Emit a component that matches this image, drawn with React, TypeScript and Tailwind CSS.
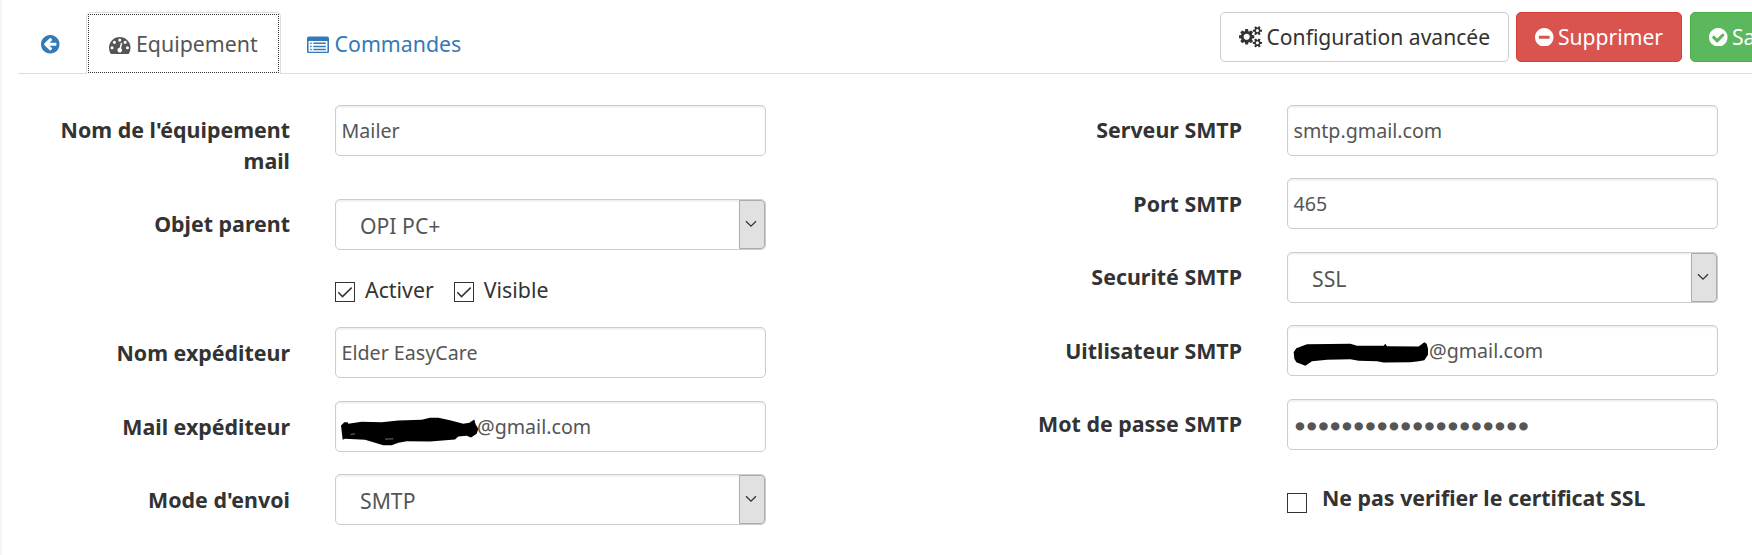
import type { ReactNode } from 'react';

type IconProps = { d: string; box: string; className: string };

const Icon = ({ d, box, className }: IconProps) => (
  <svg viewBox={box} className={`shrink-0 fill-current ${className}`} preserveAspectRatio="none">
    <path d={d} />
  </svg>
);

const ARROW =
  'M1280 832v-128q0-26-19-45t-45-19h-502l189-189q19-19 19-45t-19-45l-91-91q-18-18-45-18t-45 18l-362 362-91 91q-18 18-18 45t18 45l91 91 362 362q18 18 45 18t45-18l91-91q18-18 18-45t-18-45l-189-189h502q26 0 45-19t19-45zm256-64q0 209-103 385.5t-279.5 279.5-385.5 103-385.5-103-279.5-279.5-103-385.5 103-385.5 279.5-279.5 385.5-103 385.5 103 279.5 279.5 103 385.5z';
const MINUS =
  'M1216 832v-128q0-26-19-45t-45-19h-768q-26 0-45 19t-19 45v128q0 26 19 45t45 19h768q26 0 45-19t19-45zm320-64q0 209-103 385.5t-279.5 279.5-385.5 103-385.5-103-279.5-279.5-103-385.5 103-385.5 279.5-279.5 385.5-103 385.5 103 279.5 279.5 103 385.5z';
const CHECK =
  'M1284 606q0-28-18-46l-91-90q-19-19-45-19t-45 19l-408 407-226-226q-19-19-45-19t-45 19l-91 90q-18 18-18 46 0 27 18 45l362 362q19 19 45 19 27 0 46-19l543-543q18-18 18-45zm252 162q0 209-103 385.5t-279.5 279.5-385.5 103-385.5-103-279.5-279.5-103-385.5 103-385.5 279.5-279.5 385.5-103 385.5 103 279.5 279.5 103 385.5z';
const GAUGE =
  'M384 1152q0-53-37.5-90.5t-90.5-37.5-90.5 37.5-37.5 90.5 37.5 90.5 90.5 37.5 90.5-37.5 37.5-90.5zm192-448q0-53-37.5-90.5t-90.5-37.5-90.5 37.5-37.5 90.5 37.5 90.5 90.5 37.5 90.5-37.5 37.5-90.5zm428 481l101-382q6-26-7.5-48.5t-38.5-29.5-48 6.5-30 39.5l-101 382q-60 5-107 43.5t-63 98.5q-20 77 20 146t117 89 146-20 89-117q16-60-6-117t-72-91zm660-33q0-53-37.5-90.5t-90.5-37.5-90.5 37.5-37.5 90.5 37.5 90.5 90.5 37.5 90.5-37.5 37.5-90.5zm-640-640q0-53-37.5-90.5t-90.5-37.5-90.5 37.5-37.5 90.5 37.5 90.5 90.5 37.5 90.5-37.5 37.5-90.5zm448 192q0-53-37.5-90.5t-90.5-37.5-90.5 37.5-37.5 90.5 37.5 90.5 90.5 37.5 90.5-37.5 37.5-90.5zm320 448q0 261-141 483-19 29-54 29h-1402q-35 0-54-29-141-221-141-483 0-182 71-348t191-286 286-191 348-71 348 71 286 191 191 286 71 348z';
const LIST =
  'M384 1216v64q0 13-9.5 22.5t-22.5 9.5h-64q-13 0-22.5-9.5t-9.5-22.5v-64q0-13 9.5-22.5t22.5-9.5h64q13 0 22.5 9.5t9.5 22.5zm0-256v64q0 13-9.5 22.5t-22.5 9.5h-64q-13 0-22.5-9.5t-9.5-22.5v-64q0-13 9.5-22.5t22.5-9.5h64q13 0 22.5 9.5t9.5 22.5zm0-256v64q0 13-9.5 22.5t-22.5 9.5h-64q-13 0-22.5-9.5t-9.5-22.5v-64q0-13 9.5-22.5t22.5-9.5h64q13 0 22.5 9.5t9.5 22.5zm1152 512v64q0 13-9.5 22.5t-22.5 9.5h-960q-13 0-22.5-9.5t-9.5-22.5v-64q0-13 9.5-22.5t22.5-9.5h960q13 0 22.5 9.5t9.5 22.5zm0-256v64q0 13-9.5 22.5t-22.5 9.5h-960q-13 0-22.5-9.5t-9.5-22.5v-64q0-13 9.5-22.5t22.5-9.5h960q13 0 22.5 9.5t9.5 22.5zm0-256v64q0 13-9.5 22.5t-22.5 9.5h-960q-13 0-22.5-9.5t-9.5-22.5v-64q0-13 9.5-22.5t22.5-9.5h960q13 0 22.5 9.5t9.5 22.5zm128 704v-832q0-13-9.5-22.5t-22.5-9.5h-1472q-13 0-22.5 9.5t-9.5 22.5v832q0 13 9.5 22.5t22.5 9.5h1472q13 0 22.5-9.5t9.5-22.5zm128-1088v1088q0 66-47 113t-113 47h-1472q-66 0-113-47t-47-113v-1088q0-66 47-113t113-47h1472q66 0 113 47t47 113z';
const COGS =
  'M896 896q0-106-75-181t-181-75-181 75-75 181 75 181 181 75 181-75 75-181zm768 512q0-52-38-90t-90-38-90 38-38 90q0 53 37.5 90.5t90.5 37.5 90.5-37.5 37.5-90.5zm0-1024q0-52-38-90t-90-38-90 38-38 90q0 53 37.5 90.5t90.5 37.5 90.5-37.5 37.5-90.5zm-384 421v185q0 10-7 19.5t-16 10.5l-155 24q-11 35-32 76 34 48 90 115 7 11 7 20 0 12-7 19-23 30-82.5 89.5t-78.5 59.5q-11 0-21-7l-115-90q-37 19-77 31-11 108-23 155-7 24-30 24h-186q-11 0-20-7.5t-10-17.5l-23-153q-34-10-75-31l-118 89q-7 7-20 7-11 0-21-8-144-133-144-160 0-9 7-19 10-14 41-53t47-61q-23-44-35-82l-152-24q-10-1-17-9.5t-7-19.5v-185q0-10 7-19.5t16-10.5l155-24q11-35 32-76-34-48-90-115-7-11-7-20 0-12 7-20 22-30 82-89t79-59q11 0 21 7l115 90q34-18 77-32 11-108 23-154 7-24 30-24h186q11 0 20 7.5t10 17.5l23 153q34 10 75 31l118-89q8-7 20-7 11 0 21 8 144 133 144 160 0 8-7 19-12 16-42 54t-45 60q23 48 34 82l152 23q10 2 17 10.5t7 19.5zm640 533v140q0 16-149 31-12 27-30 52 51 113 51 138 0 4-4 7-122 71-124 71-8 0-46-47t-52-68q-20 2-30 2t-30-2q-14 21-52 68t-46 47q-2 0-124-71-4-3-4-7 0-25 51-138-18-25-30-52-149-15-149-31v-140q0-16 149-31 13-29 30-52-51-113-51-138 0-4 4-7 4-2 35-20t59-34 30-16q8 0 46 46.5t52 67.5q20-2 30-2t30 2q51-71 92-112l6-2q4 0 124 70 4 3 4 7 0 25-51 138 17 23 30 52 149 15 149 31zm0-1024v140q0 16-149 31-12 27-30 52 51 113 51 138 0 4-4 7-122 71-124 71-8 0-46-47t-52-68q-20 2-30 2t-30-2q-14 21-52 68t-46 47q-2 0-124-71-4-3-4-7 0-25 51-138-18-25-30-52-149-15-149-31v-140q0-16 149-31 13-29 30-52-51-113-51-138 0-4 4-7 4-2 35-20t59-34 30-16q8 0 46 46.5t52 67.5q20-2 30-2t30 2q51-71 92-112l6-2q4 0 124 70 4 3 4 7 0 25-51 138 17 23 30 52 149 15 149 31z';

const Row = ({ label, className, labelPad = 'pt-[9px]', children }: { label?: string; className: string; labelPad?: string; children: ReactNode }) => (
  <div className={`flex items-start ${className}`}>
    <div className={`w-[250px] shrink-0 text-right text-[21.4px] font-bold leading-[31px] ${labelPad}`}>{label}</div>
    <div className="ml-[45px] w-[431px] shrink-0">{children}</div>
  </div>
);

const Field = ({ children }: { children: ReactNode }) => (
  <div className="flex h-[51px] items-center rounded-[5px] border border-[#ccc] bg-white pl-[5.5px] text-[19.65px] leading-[49px] text-[#555] shadow-[inset_0_1.5px_1.5px_rgba(0,0,0,0.075)]">
    {children}
  </div>
);

const Select = ({ children }: { children: ReactNode }) => (
  <div className="flex h-[51px] items-stretch justify-between overflow-hidden rounded-[5px] border border-[#ccc] bg-white pl-6 text-[21.2px] leading-[51px] text-[#555] shadow-[inset_0_1.5px_1.5px_rgba(0,0,0,0.075)]">
    <span>{children}</span>
    <span className="flex w-[26px] items-center justify-center rounded-r-[4px] border border-[#adadad] bg-[#e1e1e1] pr-[2px]">
      <svg viewBox="0 0 12 8" className="mb-[2px] h-2 w-3 fill-none stroke-[#333]" strokeWidth="1.3">
        <path d="M1 1.2 6 6.2 11 1.2" />
      </svg>
    </span>
  </div>
);

const Box = ({ checked, className = '' }: { checked?: boolean; className?: string }) => (
  <span className={`block h-5 w-5 shrink-0 border border-[#333] bg-white ${className}`}>
    {checked && (
      <svg viewBox="0 0 18 18" className="h-[18px] w-[18px] fill-none stroke-[#333]" strokeWidth="1.5">
        <path d="M2.3 9.3 6.5 13.6 15.7 4.6" />
      </svg>
    )}
  </span>
);

export default function App() {
  return (
    <div className="h-[555px] w-[1752px] overflow-hidden border-l-2 border-[#f5f5f5] bg-white font-['Noto_Sans','Open_Sans',sans-serif] text-[21.33px] text-[#333]">
      <header className="ml-4 flex h-[74px] items-start border-b border-[#ddd]">
        <a className="ml-[23px] mt-[35px] block text-[#337ab7]">
          <Icon d={ARROW} box="0 0 1536 1536" className="h-[18.5px] w-[18.5px]" />
        </a>
        <div className="ml-[26.5px] mt-3 h-[62px] w-[195px] shrink-0 rounded-t-[5px] border border-b-0 border-[#ddd] bg-white px-px pt-px">
          <div className="flex h-[59px] items-center border border-dotted border-[#333] pl-5 text-[#555]">
            <Icon d={GAUGE} box="0 256 1792 1408" className="mt-[3px] h-[17px] w-[21.5px]" />
            <span className="ml-[5.5px] leading-[61px]">Equipement</span>
          </div>
        </div>
        <div className="ml-[26px] mt-3 flex h-[61px] items-center text-[#337ab7]">
          <Icon d={LIST} box="0 128 1792 1408" className="mt-[3px] h-[17px] w-[22px]" />
          <span className="ml-[5.5px] mt-[2px] leading-[61px]">Commandes</span>
        </div>
        <div className="ml-auto mr-[-60px] mt-3 flex shrink-0 text-[21.1px] leading-[48px]">
          <button className="flex h-[50px] w-[289px] items-center rounded-[5px] border border-[#ccc] bg-white pl-[18px]">
            <Icon d={COGS} box="0 0 1920 1792" className="h-[21.5px] w-[23px]" />
            <span className="ml-[4.5px]">Configuration avancée</span>
          </button>
          <button className="ml-[7px] flex h-[50px] w-[166px] items-center rounded-[5px] border border-[#d43f3a] bg-[#d9534f] pl-[18px] text-white">
            <Icon d={MINUS} box="0 0 1536 1536" className="h-[18.5px] w-[18.5px]" />
            <span className="ml-[4.5px]">Supprimer</span>
          </button>
          <button className="ml-2 flex h-[50px] w-[122px] items-center rounded-[5px] border border-[#4cae4c] bg-[#5cb85c] pl-[18px] text-white">
            <Icon d={CHECK} box="0 0 1536 1536" className="h-[18.5px] w-[18.5px]" />
            <span className="ml-[4.5px]">Sauvegarder</span>
          </button>
        </div>
      </header>

      <main className="flex pl-[38px] pt-[31px]">
        <section className="w-[952px] shrink-0">
          <Row label="Nom de l'équipement mail" className="h-[94px]"><Field>Mailer</Field></Row>
          <Row label="Objet parent" className="h-[83px]"><Select>OPI PC+</Select></Row>
          <Row className="h-[45px]">
            <div className="flex leading-[31px]">
              <Box checked />
              <span className="ml-[10px] mt-[-8px]">Activer</span>
              <Box checked className="ml-[20px]" />
              <span className="ml-[10px] mt-[-8px]">Visible</span>
            </div>
          </Row>
          <Row label="Nom expéditeur" className="h-[74px]" labelPad="pt-[10px]"><Field>Elder EasyCare</Field></Row>
          <Row label="Mail expéditeur" className="h-[73px]" labelPad="pt-[10px]">
            <Field>
              <svg viewBox="18 4.5 408 90" className="-ml-[0.5px] h-[30px] w-[136px] shrink-0 overflow-visible">
                <path d="M18 45 28 35 38 35 40 40 80 34 140 35 190 30 260 28 285 22 310 22 345 29 385 40 403 37 418 27 422 42 430 55 425 70 408 81 395 76 370 78 360 87 285 93 215 92 190 97 170 104 145 104 115 95 90 88 30 85 23 88Z" />
                <path d="M47 72 60 70M150 86 175 85" className="fill-none stroke-[#aaa]" strokeWidth="2" />
              </svg>
              @gmail.com
            </Field>
          </Row>
          <Row label="Mode d'envoi" className="h-[51px]" labelPad="pt-[10px]"><Select>SMTP</Select></Row>
        </section>
        <section className="shrink-0">
          <Row label="Serveur SMTP" className="h-[73px]"><Field>smtp.gmail.com</Field></Row>
          <Row label="Port SMTP" className="h-[74px]" labelPad="pt-[10px]"><Field>465</Field></Row>
          <Row label="Securité SMTP" className="h-[73px]"><Select>SSL</Select></Row>
          <Row label="Uitlisateur SMTP" className="h-[74px]" labelPad="pt-[10px]">
            <Field>
              <svg viewBox="18 1.5 408 90" className="-ml-[0.5px] h-[30px] w-[136px] shrink-0 overflow-visible">
                <path d="M20 50 28 38 60 26 190 25 210 31 290 31 295 25 300 32 395 33 412 20 419 25 423 40 423 58 412 74 395 77 370 80 290 81 270 77 215 76 190 71 120 73 75 77 55 91 28 80 22 70Z" />
              </svg>
              @gmail.com
            </Field>
          </Row>
          <Row label="Mot de passe SMTP" className="h-[94px]">
            <Field><span className="ml-[0.5px] tracking-[-0.1px]">●●●●●●●●●●●●●●●●●●●●</span></Field>
          </Row>
          <Row className="h-[40px]">
            <div className="flex">
              <Box />
              <span className="ml-[15px] mt-[-11px] font-bold leading-[31px]">Ne pas verifier le certificat SSL</span>
            </div>
          </Row>
        </section>
      </main>
    </div>
  );
}
